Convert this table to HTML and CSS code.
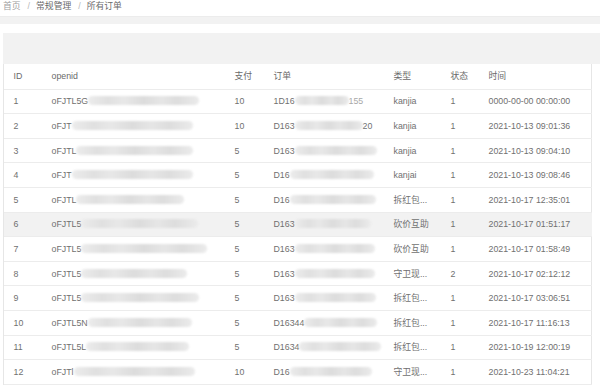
FILE: index.html
```html
<!DOCTYPE html>
<html lang="zh-CN">
<head>
<meta charset="utf-8">
<title>所有订单</title>
<link rel="stylesheet" href="styles.css">
</head>
<body>
<div class="crumb">
  <span class="crumb-first">首页</span><span class="sep">/</span><span class="crumb-item">常规管理</span><span class="sep">/</span><span class="crumb-item">所有订单</span>
</div>
<div class="page">
  <div class="card">
    <div class="tool"></div>
    <div class="view">
      <table class="grid">
        <colgroup>
          <col class="c-id"><col class="c-open"><col class="c-pay"><col class="c-order"><col class="c-type"><col class="c-state"><col class="c-time">
        </colgroup>
        <thead>
          <tr><th>ID</th><th>openid</th><th>支付</th><th>订单</th><th>类型</th><th>状态</th><th>时间</th></tr>
        </thead>
        <tbody>
          <tr><td>1</td><td>oFJTL5G<span class="blob" style="width:111px"></span></td><td>10</td><td>1D16<span class="blob" style="width:54px"></span><span class="faint">155</span></td><td>kanjia</td><td>1</td><td>0000-00-00 00:00:00</td></tr>
          <tr><td>2</td><td>oFJT<span class="blob" style="width:121px"></span></td><td>10</td><td>D163<span class="blob" style="width:68px"></span>20</td><td>kanjia</td><td>1</td><td>2021-10-13 09:01:36</td></tr>
          <tr><td>3</td><td>oFJTL<span class="blob" style="width:117px"></span></td><td>5</td><td>D163<span class="blob" style="width:82px"></span></td><td>kanjia</td><td>1</td><td>2021-10-13 09:04:10</td></tr>
          <tr><td>4</td><td>oFJT<span class="blob" style="width:121px"></span></td><td>5</td><td>D16<span class="blob" style="width:84px"></span></td><td>kanjai</td><td>1</td><td>2021-10-13 09:08:46</td></tr>
          <tr><td>5</td><td>oFJTL<span class="blob" style="width:108px"></span></td><td>5</td><td>D16<span class="blob" style="width:86px"></span></td><td>拆红包...</td><td>1</td><td>2021-10-17 12:35:01</td></tr>
          <tr class="hover"><td>6</td><td>oFJTL5<span class="blob" style="width:117px"></span></td><td>5</td><td>D163<span class="blob" style="width:76px"></span></td><td>砍价互助</td><td>1</td><td>2021-10-17 01:51:17</td></tr>
          <tr><td>7</td><td>oFJTL5<span class="blob" style="width:126px"></span></td><td>5</td><td>D163<span class="blob" style="width:80px"></span></td><td>砍价互助</td><td>1</td><td>2021-10-17 01:58:49</td></tr>
          <tr><td>8</td><td>oFJTL5<span class="blob" style="width:106px"></span></td><td>5</td><td>D163<span class="blob" style="width:80px"></span></td><td>守卫现...</td><td>2</td><td>2021-10-17 02:12:12</td></tr>
          <tr><td>9</td><td>oFJTL5<span class="blob" style="width:118px"></span></td><td>5</td><td>D163<span class="blob" style="width:81px"></span></td><td>拆红包...</td><td>1</td><td>2021-10-17 03:06:51</td></tr>
          <tr><td>10</td><td>oFJTL5N<span class="blob" style="width:104px"></span></td><td>5</td><td>D16344<span class="blob" style="width:73px"></span></td><td>拆红包...</td><td>1</td><td>2021-10-17 11:16:13</td></tr>
          <tr><td>11</td><td>oFJTL5L<span class="blob" style="width:103px"></span></td><td>5</td><td>D1634<span class="blob" style="width:82px"></span></td><td>拆红包...</td><td>1</td><td>2021-10-19 12:00:19</td></tr>
          <tr><td>12</td><td>oFJTl<span class="blob" style="width:121px"></span></td><td>10</td><td>D16<span class="blob" style="width:82px"></span></td><td>守卫现...</td><td>1</td><td>2021-10-23 11:04:21</td></tr>
        </tbody>
      </table>
    </div>
  </div>
</div>
</body>
</html>
```
FILE: styles.css
```css
html, body {
  margin: 0;
  padding: 0;
  background: #ffffff;
  overflow: hidden;
}

body {
  width: 600px;
  height: 390px;
  font-family: "Liberation Sans", "Noto Sans CJK SC", sans-serif;
  font-size: 8.8px;
  color: #707070;
}

.crumb {
  height: 12px;
  line-height: 12px;
  padding: 0 0 4px 3px;
  border-bottom: 1px solid #ececec;
  white-space: nowrap;
}

.crumb-first {
  color: #a0a0a0;
}

.crumb-item {
  color: #6a6a6a;
}

.sep {
  color: #b8b8b8;
  margin: 0 6px 0 7px;
}

.page {
  background: #f2f2f2;
  padding-top: 7px;
}

.card {
  background: #ffffff;
  padding: 9px 0 0 3px;
  height: 366px;
  box-sizing: border-box;
  overflow: hidden;
}

.tool {
  height: 31px;
  background: #f2f2f2;
  margin-right: -20px;
}

.view {
  width: 589px;
  border-left: 1px solid #e6e6e6;
  border-right: 1px solid #e6e6e6;
  box-sizing: border-box;
}

.grid {
  width: 588px;
  table-layout: fixed;
  border-collapse: collapse;
  border-spacing: 0;
}

.c-id { width: 38px; }
.c-open { width: 183px; }
.c-pay { width: 39px; }
.c-order { width: 120px; }
.c-type { width: 57px; }
.c-state { width: 38px; }
.c-time { width: 113px; }

.grid th,
.grid td {
  height: 23.6px;
  padding: 0 0 0 9.5px;
  border-bottom: 1px solid #ececec;
  text-align: left;
  font-weight: normal;
  white-space: nowrap;
  overflow: hidden;
  vertical-align: middle;
  line-height: 12px;
}

.grid th {
  height: 24.6px;
  color: #6a6a6a;
}

.grid tr.hover td {
  background: #f2f2f2;
}

.blob {
  display: inline-block;
  height: 9px;
  vertical-align: -1px;
  border-radius: 5px;
  background: linear-gradient(90deg, #ececec 0%, #e0e0e0 18%, #e8e8e8 32%, #dcdcdc 50%, #e6e6e6 66%, #dddddd 80%, #ebebeb 100%);
  filter: blur(1.3px);
}

.faint {
  color: #a8a8a8;
}
```
